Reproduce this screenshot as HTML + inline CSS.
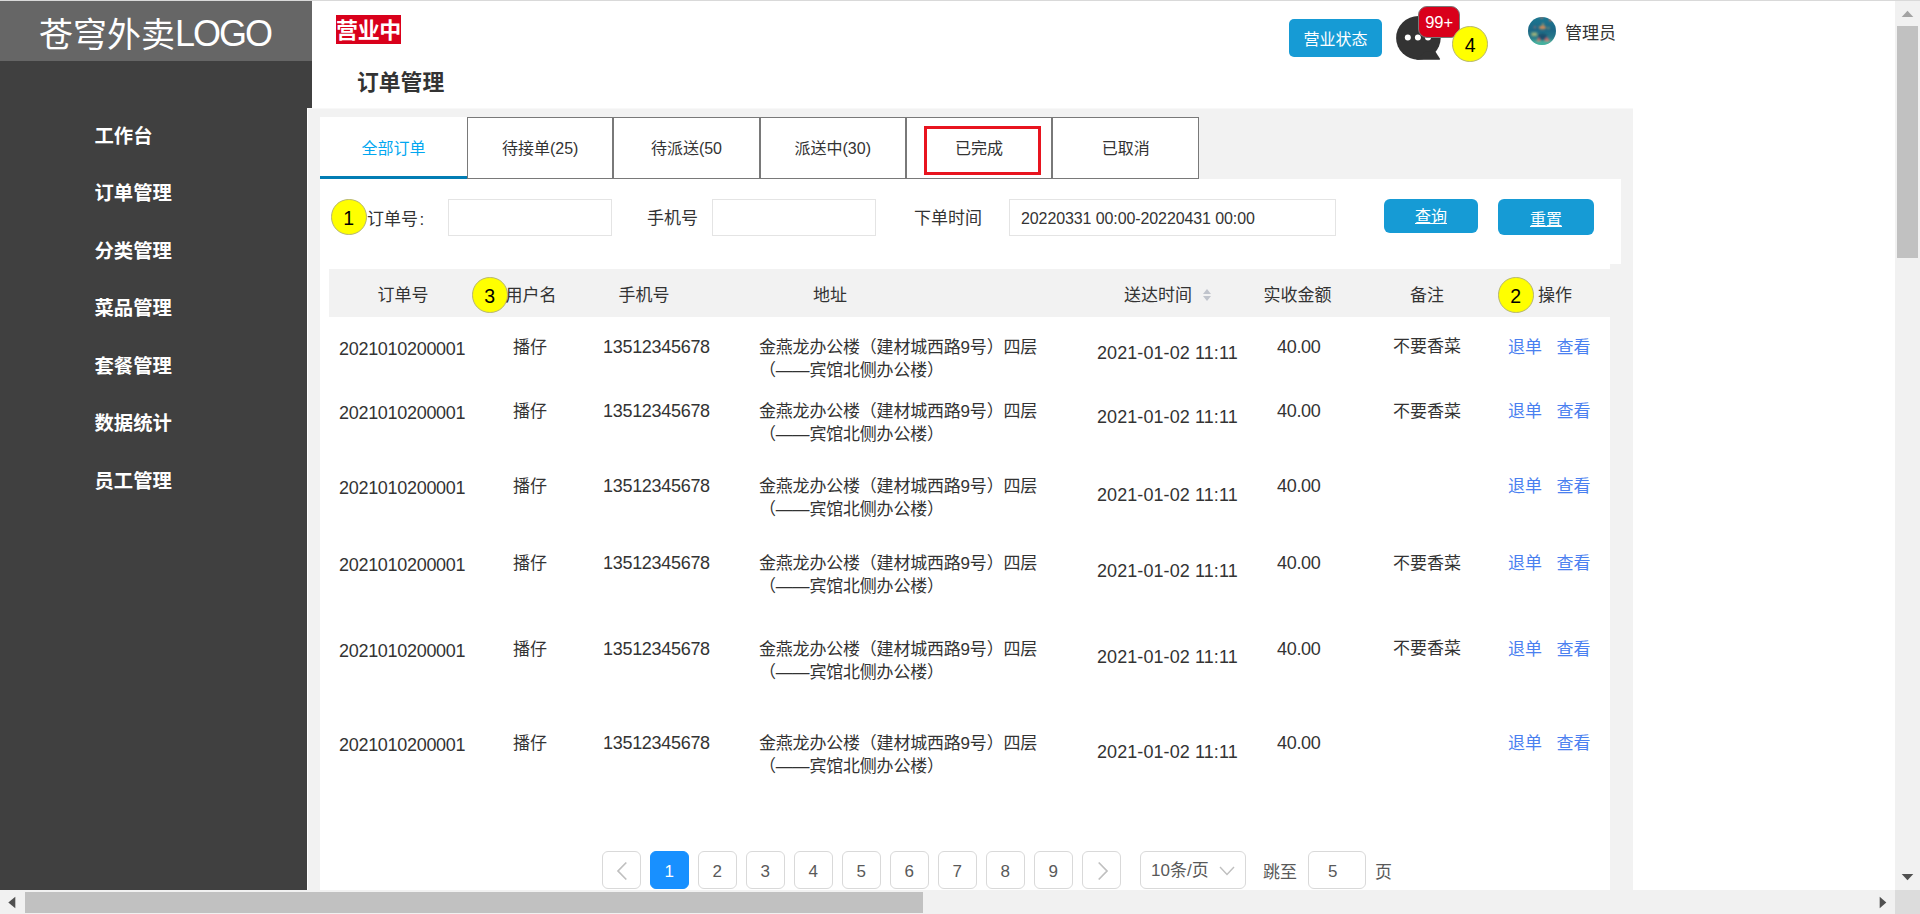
<!DOCTYPE html>
<html lang="zh-CN"><head><meta charset="utf-8"><title>订单管理</title>
<style>
*{margin:0;padding:0;box-sizing:border-box}
html,body{width:1920px;height:914px;overflow:hidden;background:#fff}
body{position:relative;font-family:"Liberation Sans", "Noto Sans CJK SC", sans-serif;color:#333;font-size:17px}
.a{position:absolute;white-space:nowrap}
.t{position:absolute;white-space:nowrap;line-height:24px;height:24px}
.c{text-align:center}
.side{left:0;top:0;width:312px;height:108px;background:#404040}
.side2{left:0;top:108px;width:307px;height:782px;background:#404040}
.logo{left:0;top:1px;width:312px;height:60px;background:#666;color:#fff;font-size:34px;line-height:60px;padding-top:4px;text-align:center;font-weight:400}
.logo span{font-size:36px;letter-spacing:-2px;position:relative;top:-1px;margin-right:2px}
.mi{left:94.5px;color:#fff;font-weight:700;font-size:19.33px;line-height:26px;height:26px}
.topline{left:0;top:0;width:1920px;z-index:5;height:1px;background:#d9d9d9}
.panel{left:307px;top:108px;width:1326px;height:782px;background:#f2f2f2;border-left:1px solid #fff;border-top:1px solid rgba(255,255,255,.45)}
.w{background:#fff}
.tab{top:117px;height:62px;background:#fff;border:1px solid #797979;font-size:16px;line-height:60px;padding-top:1px;text-align:center;color:#333}
.tab.on{border:none;border-bottom:3px solid #027db4;color:#02a7f0;line-height:62px}
.ybub{width:35.500px;height:35.500px;border-radius:50%;background:#ffff00;border:1px solid #b5b572;color:#000;font-size:19.500px;line-height:36px;text-align:center}
.inp{border:1px solid #e4e4e4;background:#fff;height:37px}
.btn{background:#169bd5;border-radius:5px;color:#fff;font-size:16px;text-align:center;overflow:hidden}
.th{top:283px}
.lk{color:#4a80f0}
.ad{letter-spacing:-0.2px}
.num{font-size:18px;letter-spacing:-0.3px}
.tm{font-size:18px;letter-spacing:0.08px}
.pg{top:851px;width:38.700px;height:38px;border:1px solid #d9d9d9;border-radius:6px;background:#fff;text-align:center;line-height:40px;font-size:17px;color:#595959;overflow:hidden}
.pg.on{background:#1890ff;border-color:#1890ff;color:#fff}
.vs{left:1895px;top:0;width:25px;height:890px;background:#f1f1f1}
.hs{left:0;top:890px;width:1895px;height:24px;background:#f1f1f1}
.corner{left:1895px;top:890px;width:25px;height:24px;background:#dcdcdc}
.thumb{background:#c1c1c1}
</style></head>
<body>
<div class="a topline"></div>
<div class="a side"></div><div class="a side2"></div>
<div class="a logo">苍穹外卖<span>LOGO</span></div>
<div class="t mi" style="top:123.5px">工作台</div>
<div class="t mi" style="top:181.0px">订单管理</div>
<div class="t mi" style="top:238.5px">分类管理</div>
<div class="t mi" style="top:296.0px">菜品管理</div>
<div class="t mi" style="top:353.5px">套餐管理</div>
<div class="t mi" style="top:411.0px">数据统计</div>
<div class="t mi" style="top:468.5px">员工管理</div>
<div class="a" style="left:336px;top:15px;width:65px;height:29px;background:#d9001b;color:#fff;font-weight:700;font-size:22px;line-height:32px;text-align:center;letter-spacing:-0.4px;overflow:hidden">营业中</div>
<div class="t" style="left:357px;top:68px;font-size:21.8px;font-weight:700;line-height:30px;height:30px;color:#333">订单管理</div>
<div class="a btn" style="left:1289px;top:19px;width:93px;height:38px;line-height:42px">营业状态</div>
<svg class="a" style="left:1390px;top:10px" width="60" height="56" viewBox="1390 10 60 56"><ellipse cx="1418.400" cy="37.900" rx="22.300" ry="21.800" fill="#333"/><path d="M1416 59.700H1439.200Q1440.600 59.700 1439.800 58.400L1435.400 51.500L1425 52z" fill="#333"/><circle cx="1407.800" cy="37.500" r="3" fill="#fff"/><circle cx="1417.900" cy="37.500" r="3" fill="#fff"/><circle cx="1428" cy="37.500" r="3" fill="#fff"/></svg>
<div class="a" style="left:1418.300px;top:6px;width:41.700px;height:31.500px;background:#d9001b;border:1px solid #797979;border-radius:9px;color:#fff;font-size:16.500px;line-height:30px;text-align:center">99+</div>
<div class="a ybub" style="left:1452.400px;top:26px">4</div>
<svg class="a" style="left:1527px;top:16px" width="30" height="30" viewBox="1527 16 30 30"><defs><linearGradient id="av" x1="0" y1="0" x2="0" y2="1"><stop offset="0" stop-color="#1a7791"/><stop offset="0.450" stop-color="#1d6786"/><stop offset="0.720" stop-color="#26788a"/><stop offset="1" stop-color="#43b09c"/></linearGradient><clipPath id="avc"><circle cx="1542" cy="31" r="14"/></clipPath><filter id="avb" x="-20%" y="-20%" width="140%" height="140%"><feGaussianBlur stdDeviation="0.900"/></filter></defs><circle cx="1542" cy="31" r="14" fill="url(#av)"/><g clip-path="url(#avc)" filter="url(#avb)"><ellipse cx="1542.500" cy="27.500" rx="3.600" ry="1.800" fill="#d28b58"/><path d="M1543 22.500l1.200 3h-2.400z" fill="#d9a860"/><ellipse cx="1542.500" cy="36.800" rx="4.500" ry="3.200" fill="#1c4f6e"/><rect x="1531.500" y="32.500" width="5.500" height="3.600" fill="#9fb37c"/><path d="M1538.600 37.500l2 3.600h-4z" fill="#e0705a"/><path d="M1547 37.200l2.800 3.900h-5.600z" fill="#e06a62"/><circle cx="1550.500" cy="19.800" r="1.500" fill="#e0705a"/><circle cx="1541.700" cy="17.300" r="1.200" fill="#d9705a"/><circle cx="1534.800" cy="27.300" r="1" fill="#c06a6a"/><path d="M1548.500 26.500l1 2.500h-2z" fill="#c9a060"/><rect x="1528" y="41" width="28" height="5" fill="#47b5a0" opacity=".7"/></g></svg>
<div class="t" style="left:1565px;top:22px">管理员</div>
<div class="a panel"></div>
<div class="a w" style="left:320px;top:179px;width:1301px;height:85px"></div>
<div class="a w" style="left:320px;top:264px;width:1290px;height:626px"></div>
<div class="a" style="left:329px;top:269px;width:1281px;height:48px;background:#f2f2f2"></div>
<div class="a tab on" style="left:320.0px;width:147.0px">全部订单</div>
<div class="a tab" style="left:467.0px;width:146.3px">待接单(25)</div>
<div class="a tab" style="left:613.3px;width:146.3px">待派送(50</div>
<div class="a tab" style="left:759.6px;width:146.3px">派送中(30)</div>
<div class="a tab" style="left:905.9px;width:146.3px">已完成</div>
<div class="a tab" style="left:1052.2px;width:147.0px">已取消</div>
<div class="a" style="left:924px;top:126px;width:117px;height:49px;border:3px solid #e8141f"></div>
<div class="a ybub" style="left:331px;top:199.200px">1</div>
<div class="t" style="left:367px;top:207.5px">订单号<span style="margin-left:1.500px">:</span></div>
<div class="a inp" style="left:448px;top:199px;width:164px"></div>
<div class="t" style="left:647px;top:207px">手机号</div>
<div class="a inp" style="left:712px;top:199px;width:164px"></div>
<div class="t" style="left:914px;top:207px">下单时间</div>
<div class="a inp" style="left:1009px;top:199px;width:327px"></div>
<div class="t" style="left:1021px;top:207px;font-size:16px;letter-spacing:-0.1px">20220331 00:00-20220431 00:00</div>
<div class="a btn" style="left:1384px;top:199px;width:94px;height:34px;line-height:35px;text-decoration:underline;border-radius:6px">查询</div>
<div class="a btn" style="left:1498px;top:199px;width:96px;height:36px;line-height:41px;text-decoration:underline;border-radius:6px">重置</div>
<div class="t c " style="left:253.0px;top:284.0px;width:300px;">订单号</div>
<div class="a ybub" style="left:472px;top:277px">3</div>
<div class="t " style="left:505.5px;top:284.0px;">用户名</div>
<div class="t c " style="left:494.0px;top:284.0px;width:300px;">手机号</div>
<div class="t c " style="left:680.0px;top:284.0px;width:300px;">地址</div>
<div class="t " style="left:1124.0px;top:284.0px;">送达时间</div>
<svg class="a" style="left:1201.500px;top:288px" width="10" height="14" viewBox="0 0 10 14"><path d="M5 1L9 6H1z M5 13L1 8H9z" fill="#c0c4cc"/></svg>
<div class="t c " style="left:1147.5px;top:284.0px;width:300px;">实收金额</div>
<div class="t c " style="left:1277.0px;top:284.0px;width:300px;">备注</div>
<div class="a ybub" style="left:1498px;top:277px">2</div>
<div class="t " style="left:1538.0px;top:284.0px;">操作</div>
<div class="t num" style="left:339.0px;top:337.0px;">2021010200001</div>
<div class="t " style="left:513.0px;top:336.0px;">播仔</div>
<div class="t num" style="left:603.0px;top:335.0px;">13512345678</div>
<div class="t ad" style="left:759.0px;top:336.0px;">金燕龙办公楼（建材城西路9号）四层</div>
<div class="t ad" style="left:759.0px;top:359.0px;">（——宾馆北侧办公楼）</div>
<div class="t tm" style="left:1097.0px;top:341.0px;">2021-01-02 11:11</div>
<div class="t num" style="left:1277.0px;top:335.0px;">40.00</div>
<div class="t " style="left:1393.0px;top:335.0px;">不要香菜</div>
<div class="t lk" style="left:1508.0px;top:336.0px;">退单</div>
<div class="t lk" style="left:1556.5px;top:336.0px;">查看</div>
<div class="t num" style="left:339.0px;top:401.0px;">2021010200001</div>
<div class="t " style="left:513.0px;top:400.0px;">播仔</div>
<div class="t num" style="left:603.0px;top:399.0px;">13512345678</div>
<div class="t ad" style="left:759.0px;top:400.0px;">金燕龙办公楼（建材城西路9号）四层</div>
<div class="t ad" style="left:759.0px;top:423.0px;">（——宾馆北侧办公楼）</div>
<div class="t tm" style="left:1097.0px;top:405.0px;">2021-01-02 11:11</div>
<div class="t num" style="left:1277.0px;top:399.0px;">40.00</div>
<div class="t " style="left:1393.0px;top:400.0px;">不要香菜</div>
<div class="t lk" style="left:1508.0px;top:400.0px;">退单</div>
<div class="t lk" style="left:1556.5px;top:400.0px;">查看</div>
<div class="t num" style="left:339.0px;top:476.0px;">2021010200001</div>
<div class="t " style="left:513.0px;top:475.0px;">播仔</div>
<div class="t num" style="left:603.0px;top:474.0px;">13512345678</div>
<div class="t ad" style="left:759.0px;top:475.0px;">金燕龙办公楼（建材城西路9号）四层</div>
<div class="t ad" style="left:759.0px;top:498.0px;">（——宾馆北侧办公楼）</div>
<div class="t tm" style="left:1097.0px;top:483.0px;">2021-01-02 11:11</div>
<div class="t num" style="left:1277.0px;top:474.0px;">40.00</div>
<div class="t lk" style="left:1508.0px;top:475.0px;">退单</div>
<div class="t lk" style="left:1556.5px;top:475.0px;">查看</div>
<div class="t num" style="left:339.0px;top:553.0px;">2021010200001</div>
<div class="t " style="left:513.0px;top:552.0px;">播仔</div>
<div class="t num" style="left:603.0px;top:551.0px;">13512345678</div>
<div class="t ad" style="left:759.0px;top:552.0px;">金燕龙办公楼（建材城西路9号）四层</div>
<div class="t ad" style="left:759.0px;top:575.0px;">（——宾馆北侧办公楼）</div>
<div class="t tm" style="left:1097.0px;top:559.0px;">2021-01-02 11:11</div>
<div class="t num" style="left:1277.0px;top:551.0px;">40.00</div>
<div class="t " style="left:1393.0px;top:552.0px;">不要香菜</div>
<div class="t lk" style="left:1508.0px;top:552.0px;">退单</div>
<div class="t lk" style="left:1556.5px;top:552.0px;">查看</div>
<div class="t num" style="left:339.0px;top:639.0px;">2021010200001</div>
<div class="t " style="left:513.0px;top:638.0px;">播仔</div>
<div class="t num" style="left:603.0px;top:637.0px;">13512345678</div>
<div class="t ad" style="left:759.0px;top:638.0px;">金燕龙办公楼（建材城西路9号）四层</div>
<div class="t ad" style="left:759.0px;top:661.0px;">（——宾馆北侧办公楼）</div>
<div class="t tm" style="left:1097.0px;top:645.0px;">2021-01-02 11:11</div>
<div class="t num" style="left:1277.0px;top:637.0px;">40.00</div>
<div class="t " style="left:1393.0px;top:637.0px;">不要香菜</div>
<div class="t lk" style="left:1508.0px;top:638.0px;">退单</div>
<div class="t lk" style="left:1556.5px;top:638.0px;">查看</div>
<div class="t num" style="left:339.0px;top:733.0px;">2021010200001</div>
<div class="t " style="left:513.0px;top:732.0px;">播仔</div>
<div class="t num" style="left:603.0px;top:731.0px;">13512345678</div>
<div class="t ad" style="left:759.0px;top:732.0px;">金燕龙办公楼（建材城西路9号）四层</div>
<div class="t ad" style="left:759.0px;top:755.0px;">（——宾馆北侧办公楼）</div>
<div class="t tm" style="left:1097.0px;top:740.0px;">2021-01-02 11:11</div>
<div class="t num" style="left:1277.0px;top:731.0px;">40.00</div>
<div class="t lk" style="left:1508.0px;top:732.0px;">退单</div>
<div class="t lk" style="left:1556.5px;top:732.0px;">查看</div>
<div class="a pg" style="left:602px"><svg width="12" height="20" viewBox="0 0 12 20" style="position:absolute;left:13px;top:8.500px"><path d="M10.300 1.500L2 10l8.300 8.500" fill="none" stroke="#bfbfbf" stroke-width="1.700"/></svg></div>
<div class="a pg on" style="left:650px">1</div>
<div class="a pg" style="left:698px">2</div>
<div class="a pg" style="left:746px">3</div>
<div class="a pg" style="left:794px">4</div>
<div class="a pg" style="left:842px">5</div>
<div class="a pg" style="left:890px">6</div>
<div class="a pg" style="left:938px">7</div>
<div class="a pg" style="left:986px">8</div>
<div class="a pg" style="left:1034px">9</div>
<div class="a pg" style="left:1082px"><svg width="12" height="20" viewBox="0 0 12 20" style="position:absolute;left:13.500px;top:8.500px"><path d="M1.700 1.500L10 10l-8.300 8.500" fill="none" stroke="#bfbfbf" stroke-width="1.700"/></svg></div>
<div class="a pg" style="left:1140px;width:106px;text-align:left;padding-left:10px;line-height:38px">10条/页<svg width="16" height="10" viewBox="0 0 16 10" style="position:absolute;left:78px;top:14px"><path d="M1 1l7 7.500L15 1" fill="none" stroke="#bfbfbf" stroke-width="1.400"/></svg></div>
<div class="t" style="left:1263px;top:861px;color:#595959">跳至</div>
<div class="a pg" style="left:1308px;width:58px;text-align:left;padding-left:19px">5</div>
<div class="t" style="left:1375px;top:861px;color:#595959">页</div>
<div class="a vs"></div><div class="a hs"></div><div class="a corner"></div>
<div class="a thumb" style="left:1897px;top:26px;width:21px;height:232px"></div>
<div class="a thumb" style="left:25px;top:892px;width:898px;height:21px"></div>
<svg class="a" style="left:1901px;top:10px" width="13" height="8" viewBox="0 0 13 8"><path d="M6.500 0.700L12.300 6.900H0.700z" fill="#a3a3a3"/></svg>
<svg class="a" style="left:1901px;top:873px" width="13" height="8" viewBox="0 0 13 8"><path d="M6.500 7.300L12.300 1H0.700z" fill="#505050"/></svg>
<svg class="a" style="left:8px;top:896px" width="8" height="13" viewBox="0 0 8 13"><path d="M0.300 6.500L7.300 0.700V12.300z" fill="#505050"/></svg>
<svg class="a" style="left:1878.800px;top:896px" width="8" height="13" viewBox="0 0 8 13"><path d="M7.300 6.500L0.700 0.700V12.300z" fill="#505050"/></svg>
</body></html>
